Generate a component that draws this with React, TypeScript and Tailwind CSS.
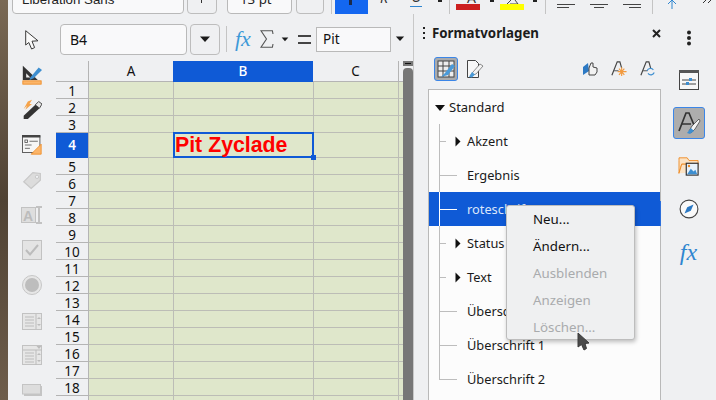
const ROWS = Array.from({ length: 19 }, (_, i) => i + 1);
const FONT = 'font-["Noto_Sans",sans-serif]';

function Chevron({ className = '' }: { className?: string }) {
  return (
    <svg width="12" height="7" viewBox="0 0 12 7" className={`shrink-0 ${className}`}>
      <path d="M1 0.5h10L6 6z" fill="#1a1a1a" />
    </svg>
  );
}

function ToolIcons() {
  return (
    <div className="flex flex-col items-center w-[48px] pt-[16px] shrink-0">
      <svg width="14" height="20" viewBox="0 0 14 20">
        <path d="M0.7 0.7 L0.7 15 L3.8 12.5 L6.6 19 L9.6 17.6 L7 11.2 L13 10.8 Z" fill="#fafafa" stroke="#3a3a3a" strokeWidth="1" />
      </svg>
      <svg width="20" height="20" viewBox="0 0 24 24" className="mt-[15px]">
        <path d="M1 1 L1 18 L19 18 Z" fill="#333" />
        <path d="M5 10 L5 15 L10 15Z" fill="#eee" />
        <path d="M10 15 L20 3 L24 6 L14 16 L9 18Z" fill="#3d8ed0" />
        <rect x="1" y="19" width="22" height="4" fill="#fbb56a" stroke="#ee8a22" />
      </svg>
      <svg width="20" height="20" viewBox="0 0 24 24" className="mt-[14px]">
        <path d="M2 24 L2 20 L16 7 L21 11 L7 24Z" fill="#333" />
        <path d="M16 7 L20 3 L24 6 L21 11Z" fill="#e4e4e4" stroke="#333" />
        <path d="M2 12 L7 3 L12 1 L9 6 L12 6 L4 13 L6 8Z" fill="#f5a34a" />
      </svg>
      <svg width="20" height="20" viewBox="0 0 24 24" className="mt-[16px]">
        <rect x="0.5" y="1" width="21" height="20" fill="#f6f6f6" stroke="#444" />
        <rect x="0" y="0" width="22" height="3" fill="#444" />
        <rect x="3.5" y="6" width="3" height="3" fill="none" stroke="#555" />
        <path d="M9 7.5h10M3.5 12h8M3.5 16h6" stroke="#555" />
        <path d="M11 23 L23 11 L23 23Z" fill="#fbb56a" stroke="#ee8a22" />
      </svg>
      <svg width="20" height="20" viewBox="0 0 24 24" className="mt-[16px]">
        <path d="M2 13 L13 2 L22 3 L22 11 L11 21Z" fill="#dcdcdc" stroke="#c8c8c8" strokeWidth="1.5" />
        <circle cx="18" cy="7" r="2" fill="#f0f1f3" stroke="#c2c2c2" />
      </svg>
      <svg width="22" height="18" viewBox="0 0 22 18" className="mt-[15px]">
        <rect x="0.5" y="1.5" width="14" height="15" fill="#dedede" stroke="#c2c2c2" />
        <text x="2" y="14.5" fontSize="14" fontWeight="bold" fill="#bcbcbc" fontFamily="Liberation Sans">A</text>
        <path d="M15 1h6M18 1v16M15 17h6" stroke="#c2c2c2" strokeWidth="2" fill="none" />
      </svg>
      <svg width="20" height="20" viewBox="0 0 20 20" className="mt-[16px]">
        <rect x="0.5" y="0.5" width="19" height="19" fill="#e4e4e4" stroke="#c2c2c2" />
        <path d="M4 10 L8 14.5 L16 5" stroke="#bcbcbc" strokeWidth="2" fill="none" />
      </svg>
      <svg width="20" height="20" viewBox="0 0 20 20" className="mt-[15px]">
        <circle cx="10" cy="10" r="9.5" fill="#e6e6e6" stroke="#c6c6c6" />
        <circle cx="10" cy="10" r="7" fill="#bdbdbd" />
      </svg>
      <svg width="20" height="17" viewBox="0 0 20 17" className="mt-[18px]">
        <rect x="0.5" y="0.5" width="19" height="16" fill="#e6e6e6" stroke="#c2c2c2" />
        <path d="M3 4h9M3 7h9M3 10h9M3 13h9M14 1v15" stroke="#bcbcbc" />
        <path d="M15 6l2-2 2 2zM15 11l2 2 2-2z" fill="#bcbcbc" />
      </svg>
      <svg width="20" height="20" viewBox="0 0 20 20" className="mt-[15px]">
        <rect x="0.5" y="0.5" width="19" height="19" fill="#e6e6e6" stroke="#c2c2c2" />
        <path d="M3 8h9M3 11h9M3 14h9M3 17h9M14 5v15M1 5h19" stroke="#bcbcbc" />
        <path d="M14.5 1h5l-2.5 3zM15 10l2-2 2 2zM15 15l2 2 2-2z" fill="#bcbcbc" />
      </svg>
      <svg width="20" height="12" viewBox="0 0 20 12" className="mt-[19px]">
        <rect x="2" y="2" width="18" height="10" fill="#c4c4c4" />
        <rect x="0.5" y="0.5" width="18" height="9.5" fill="#dddddd" stroke="#c4c4c4" />
      </svg>
    </div>
  );
}

function FormulaBar() {
  return (
    <div className="h-[32px] flex items-center shrink-0">
      <div className="w-[127px] h-[31px] bg-[#f9f9fa] border border-[#b9b9b9] rounded-[4px] ml-[4px] pl-[9px] flex items-center text-[14px] text-[#111] shrink-0">B4</div>
      <div className="w-[30px] h-[31px] border border-[#bdbdbd] rounded-[4px] ml-[3px] flex items-center justify-center shrink-0"><Chevron /></div>
      <div className="w-px h-[26px] bg-[#c4c4c4] ml-[6px] shrink-0" />
      <span className="ml-[8px] w-[16px] shrink-0 text-[22px] italic text-[#3d9ad8] font-['Liberation_Serif',serif] leading-none">fx</span>
      <svg width="14" height="18" viewBox="0 0 14 18" className="ml-[9px] shrink-0">
        <path d="M13 4 L12.4 0.7 L1 0.7 L6.5 9 L1 17.3 L12.4 17.3 L13 14" fill="none" stroke="#555" strokeWidth="1.1" />
      </svg>
      <Chevron className="ml-[7px] w-[8px] h-[5px]" />
      <div className="ml-[9px] w-[13px] h-[9px] border-y-2 border-[#444] shrink-0" />
      <div className="ml-[5px] w-[75px] h-[25px] bg-[#f9f9fa] border border-[#b9b9b9] pl-[6px] flex items-center text-[13.5px] text-[#111] shrink-0">Pit</div>
      <Chevron className="ml-[4px] w-[10px] h-[6px]" />
    </div>
  );
}

function Sheet() {
  return (
    <div className="flex-1 flex flex-col overflow-hidden mt-[6px]">
      <div className="flex h-[21px] shrink-0 text-[13.5px] text-[#111] leading-[20px] text-center">
        <div className="w-[33px] border-r border-b border-[#b4b4b4] shrink-0" />
        <div className="w-[84px] border-b border-[#b4b4b4] shrink-0">A</div>
        <div className="w-[140px] bg-[#0f5ad6] text-white font-medium shrink-0">B</div>
        <div className="w-[86px] border-r border-b border-[#b4b4b4] shrink-0">C</div>
        <div className="flex-1 border-b border-[#b4b4b4]" />
      </div>
      {ROWS.map(r => {
        const active = r === 4;
        return (
          <div key={r} className={`flex shrink-0 ${active ? 'h-[25px]' : 'h-[17px]'}`}>
            <div className={`w-[33px] shrink-0 border-r border-[#b4b4b4] text-center text-[13.5px] ${active ? 'bg-[#0f5ad6] text-white font-semibold leading-[25px]' : 'border-b text-[#111] leading-[18px]'}`}>{r}</div>
            <div className="w-[84px] shrink-0 bg-[#dfe7cb] border-b border-[#bcbdb6]" />
            <div className="relative w-[140px] shrink-0 bg-[#dfe7cb] border-l border-b border-[#bcbdb6]">
              {active && (
                <div className="absolute z-10 left-[-1px] top-[-1px] w-[141px] h-[26px] border-2 border-[#0f5ad6] font-['Liberation_Sans',sans-serif] font-bold text-[21.3px] leading-[23px] text-[#ff0000] whitespace-nowrap">
                  Pit Zyclade
                  <span className="absolute right-[-4px] bottom-[-4px] w-[5px] h-[5px] bg-[#0f5ad6]" />
                </div>
              )}
            </div>
            <div className="w-[86px] shrink-0 bg-[#dfe7cb] border-l border-r border-b border-[#bcbdb6]" />
            <div className="flex-1 bg-[#dfe7cb] border-b border-[#bcbdb6]" />
          </div>
        );
      })}
    </div>
  );
}

function Tree({ label, arrow = false, selected = false, last = false }: { label: string; arrow?: boolean; selected?: boolean; last?: boolean }) {
  return (
    <div className={`relative h-[34px] text-[12.8px] ${selected ? 'bg-[#0f5ad6] text-[#dbe6fa]' : 'text-[#1a1a1a]'}`}>
      <span className={`absolute left-[10px] top-0 w-px ${last ? 'h-[17px]' : 'h-full'} ${selected ? 'bg-white' : 'bg-[#bdbdbd]'}`} />
      <span className={`absolute left-[10px] top-[17px] h-px ${arrow ? 'w-[7px]' : 'w-[18px]'} ${selected ? 'bg-white' : 'bg-[#bdbdbd]'}`} />
      {arrow && (
        <svg width="6" height="11" viewBox="0 0 6 11" className="absolute left-[26px] top-[12px]">
          <path d="M0.5 0.5 L5.5 5.5 L0.5 10.5Z" fill="#111" />
        </svg>
      )}
      <span className="absolute left-[38px] top-[7px] leading-[20px]">{label}</span>
    </div>
  );
}

function Menu() {
  const items: [string, boolean][] = [['Neu...', true], ['Ändern...', true], ['Ausblenden', false], ['Anzeigen', false], ['Löschen...', false]];
  return (
    <div className="absolute left-[506px] top-[205px] w-[129px] h-[135px] bg-[#eff0f1] border border-[#bdbdbd] rounded-[3px] shadow-[1px_2px_4px_rgba(0,0,0,0.25)] py-px">
      {items.map(([t, on]) => (
        <div key={t} className={`h-[27px] pl-[26px] text-[13.3px] leading-[24px] ${on ? 'text-[#111]' : 'text-[#a9abad]'}`}>{t}</div>
      ))}
    </div>
  );
}

function StylesPanel() {
  return (
    <div className="w-[247px] flex flex-col shrink-0">
      <div className="h-[38px] flex items-center relative shrink-0">
        <svg width="4" height="14" viewBox="0 0 4 14" className="absolute left-[8px] top-[12px]">
          <path d="M2 1v2M2 6v2M2 11v2" stroke="#222" strokeWidth="2" />
        </svg>
        <span className="text-[13.3px] font-bold text-[#1c1c1c] ml-[18px] mt-[2px]">Formatvorlagen</span>
        <svg width="9" height="9" viewBox="0 0 9 9" className="absolute left-[238px] top-[15px]">
          <path d="M1 1l7 7M8 1l-7 7" stroke="#222" strokeWidth="2" />
        </svg>
      </div>
      <div className="flex items-center h-[34px] pl-[20px] shrink-0">
        <div className="w-[24px] h-[24px] rounded-[3px] border border-[#3b86e8] bg-[#a9abad] flex items-center justify-center">
          <svg width="19" height="19" viewBox="0 0 19 19">
            <rect x="1" y="1" width="16" height="16" fill="#eee" stroke="#444" />
            <path d="M1 6h16M1 11h16M6 1v16M12 1v16" stroke="#444" />
            <path d="M4 17 L8 13 L15 4 L18 6 L11 15 Z" fill="#4a9ad8" />
          </svg>
        </div>
        <svg width="18" height="20" viewBox="0 0 18 20" className="ml-[8px]">
          <path d="M1.5 1.5h8l3 3v14h-11z" fill="#f7f7f7" stroke="#444" />
          <path d="M4 17 L7 13 L14 5 L17 7 L10 15Z" fill="#f4f4f4" stroke="#444" strokeWidth="0.6" />
          <path d="M3 18 L6 13 L9 15.5 L6 18.5Z" fill="#4a9ad8" />
        </svg>
        <svg width="15" height="14" viewBox="0 0 15 14" className="ml-[99px]">
          <path d="M0 5 L5 1 L6 9 L0 13Z" fill="#2c79c4" />
          <path d="M6 13 V6 L8 1 L10 1 V5 L14 6 V10 L12 13Z" fill="#f2f2f2" stroke="#444" />
        </svg>
        <svg width="16" height="16" viewBox="0 0 18 18" className="ml-[13px]">
          <path d="M1 16 L7 1 L10 1 L12 8" fill="none" stroke="#444" strokeWidth="1.3" />
          <path d="M3.5 11h5" stroke="#444" />
          <path d="M12 7v10M7.5 12h10M9 8.5l6 7M15 8.5l-6 7" stroke="#f29a3f" strokeWidth="1.3" />
        </svg>
        <svg width="16" height="16" viewBox="0 0 18 18" className="ml-[13px]">
          <path d="M1 16 L7 1 L10 1 L12 8" fill="none" stroke="#444" strokeWidth="1.3" />
          <path d="M3.5 11h5" stroke="#444" />
          <path d="M8 11a4 4 0 0 1 7-1M16 13a4 4 0 0 1-7 1" fill="none" stroke="#3d8ed0" strokeWidth="1.3" />
        </svg>
      </div>
      <div className="mt-[3px] ml-[14px] w-[233px] flex-1 bg-[#fcfcfc] border border-[#b9b9b9] border-b-0">
        <div className="h-[34px] text-[13px] text-[#1a1a1a] relative">
          <svg width="10" height="6" viewBox="0 0 10 6" className="absolute left-[6px] top-[15px]"><path d="M0 0h10L5 6z" fill="#111" /></svg>
          <span className="absolute left-[20px] top-[7px] leading-[20px]">Standard</span>
        </div>
        <Tree label="Akzent" arrow />
        <Tree label="Ergebnis" />
        <Tree label="roteschrift" selected />
        <Tree label="Status" arrow />
        <Tree label="Text" arrow />
        <Tree label="Überschrift" />
        <Tree label="Überschrift 1" />
        <Tree label="Überschrift 2" last />
      </div>
    </div>
  );
}

function TabBar() {
  return (
    <div className="flex-1 flex flex-col items-center relative">
      <span className="absolute left-[-1px] top-[187px] w-px h-[25px] bg-[#2c6fdc]" />
      <svg width="6" height="16" viewBox="0 0 6 16" className="mt-[16px] shrink-0">
        <circle cx="3" cy="2.5" r="2" fill="#222" /><circle cx="3" cy="8" r="2" fill="#222" /><circle cx="3" cy="13.5" r="2" fill="#222" />
      </svg>
      <svg width="20" height="20" viewBox="0 0 20 20" className="mt-[24px] shrink-0">
        <rect x="0.5" y="0.5" width="19" height="19" fill="#f7f7f7" stroke="#444" />
        <rect x="0" y="0" width="20" height="3" fill="#555" />
        <path d="M3 10h14M3 14h14" stroke="#444" />
        <rect x="10" y="8" width="3" height="3" fill="#3d8ed0" /><rect x="7" y="12" width="3" height="3" fill="#3d8ed0" />
      </svg>
      <div className="mt-[17px] w-[32px] h-[32px] rounded-[3px] border border-[#3b86e8] bg-[#adadad] flex items-center justify-center shrink-0">
        <svg width="24" height="24" viewBox="0 0 24 24">
          <path d="M2 20 L9 2 L12 2 L17 14" fill="none" stroke="#333" strokeWidth="1.7" />
          <path d="M5 13h9" stroke="#333" strokeWidth="1.5" />
          <path d="M12 20 L15 15 L22 8 L23 10 L18 18 L14 22 Z" fill="#f4f4f4" stroke="#333" strokeWidth="0.7" />
          <path d="M10 22 L14 17 L17 20 L13 23Z" fill="#3d8ed0" />
        </svg>
      </div>
      <svg width="22" height="20" viewBox="0 0 24 22" className="mt-[17px] shrink-0">
        <path d="M1 5 V2 H10 L12 5 H22 V9 H4 L1 19Z" fill="#fce3c4" stroke="#ee8a22" />
        <path d="M1 19 L4 9 H22 L21 18" fill="#fce3c4" stroke="#ee8a22" />
        <rect x="9" y="8" width="13" height="13" fill="#e8f2fb" stroke="#333" strokeWidth="1.3" />
        <path d="M10 20 L14 14 L17 17 L19 15 L21 20Z" fill="#3d8ed0" />
        <circle cx="12" cy="11" r="1.3" fill="#ee8a22" />
      </svg>
      <svg width="20" height="20" viewBox="0 0 22 22" className="mt-[23px] shrink-0">
        <circle cx="11" cy="11" r="9.8" fill="#fafafa" stroke="#444" strokeWidth="1.2" />
        <path d="M16 6 L13 13 L6 16 L9 9Z" fill="#2c79c4" />
      </svg>
      <span className="mt-[19px] text-[24px] italic text-[#2f86d0] font-['Liberation_Serif',serif] leading-[28px]">fx</span>
    </div>
  );
}

function TopBar() {
  return (
    <div className="h-[14px] relative overflow-hidden shrink-0">
      <div className="absolute left-[4px] top-[-16px] w-[172px] h-[30px] bg-[#f9f9fa] border border-[#b9b9b9] rounded-[4px] pl-[9px] text-[13.3px] leading-[29px] font-['Liberation_Sans',sans-serif] text-[#222]">Liberation Sans</div>
      <div className="absolute left-[179px] top-[-16px] w-[30px] h-[30px] border border-[#bdbdbd] rounded-[4px]" />
      <span className="absolute left-[193px] top-0 w-px h-[3px] bg-[#333]" />
      <div className="absolute left-[219px] top-[-16px] w-[65px] h-[30px] bg-[#f9f9fa] border border-[#b9b9b9] rounded-[4px] pl-[12px] text-[13.3px] leading-[29px] text-[#222]">13 pt</div>
      <div className="absolute left-[288px] top-[-16px] w-[28px] h-[30px] border border-[#bdbdbd] rounded-[4px]" />
      <span className="absolute left-[323px] top-0 w-px h-[14px] bg-[#c4c4c4]" />
      <div className="absolute left-[327px] top-[-10px] w-[33px] h-[26px] bg-[#1467f0] rounded-[3px]"><span className="absolute left-[14px] top-[4px] w-[3px] h-[11px] bg-[#1b2a4a]" /></div>
      <div className="absolute left-[372px] top-[-12px] text-[14px] italic text-[#333] leading-[20px]">K</div>
      <div className="absolute left-[403px] top-[-13px] text-[14px] text-[#333] leading-[20px]">U</div>
      <span className="absolute left-[402px] top-[6px] w-[12px] h-px bg-[#2f86d0]" />
      <span className="absolute left-[430px] top-0 w-[4px] h-[2px] bg-[#222]" />
      <span className="absolute left-[441px] top-0 w-px h-[15px] bg-[#c4c4c4]" />
      <div className="absolute left-[459px] top-[-12px] text-[14px] text-[#333] leading-[20px]">A</div>
      <span className="absolute left-[448px] top-[4px] w-[24px] h-[6px] bg-[#cc1f1f]" />
      <span className="absolute left-[482px] top-0 w-[4px] h-[2px] bg-[#222]" />
      <svg width="14" height="4" viewBox="0 0 14 4" className="absolute left-[498px] top-0"><path d="M1 4 L5 0M9 0 L12 4 L4 4" fill="#eee" stroke="#444" /></svg>
      <span className="absolute left-[492px] top-[4px] w-[24px] h-[6px] bg-[#ffff00]" />
      <span className="absolute left-[525px] top-0 w-[4px] h-[2px] bg-[#222]" />
      <span className="absolute left-[537px] top-0 w-px h-[15px] bg-[#c4c4c4]" />
      <span className="absolute left-[549px] top-[4px] w-[18px] h-px bg-[#444]" />
      <span className="absolute left-[549px] top-[7px] w-[12px] h-px bg-[#444]" />
      <span className="absolute left-[582px] top-[4px] w-[18px] h-px bg-[#444]" />
      <span className="absolute left-[586px] top-[7px] w-[10px] h-px bg-[#444]" />
      <span className="absolute left-[615px] top-[4px] w-[18px] h-px bg-[#444]" />
      <span className="absolute left-[621px] top-[7px] w-[12px] h-px bg-[#444]" />
      <span className="absolute left-[644px] top-0 w-px h-[15px] bg-[#c4c4c4]" />
      <svg width="10" height="10" viewBox="0 0 10 10" className="absolute left-[659px] top-0">
        <path d="M5 0v9M1 4l4-4 4 4" fill="none" stroke="#2f86d0" />
      </svg>
      <svg width="10" height="4" viewBox="0 0 10 4" className="absolute left-[695px] top-0">
        <path d="M0 3l3-3M5 3l3-3" fill="none" stroke="#333" />
      </svg>
    </div>
  );
}

export default function App() {
  return (
    <div className={`relative w-[716px] h-[400px] overflow-hidden flex bg-[#eff0f2] ${FONT}`}>
      <div className="w-[8px] h-full bg-gradient-to-b from-[#7a6955] via-[#4f4234] to-[#6e5d4b] shrink-0" />
      <div className="flex-1 flex flex-col min-w-0">
        <TopBar />
        <div className="flex-1 flex min-h-0">
          <ToolIcons />
          <div className="w-[347px] flex flex-col shrink-0 pt-[9px]">
            <FormulaBar />
            <Sheet />
          </div>
          <div className="w-[10px] shrink-0 flex flex-col pt-[47px]">
            <div className="h-[5px] bg-[#777] flex items-center px-[2px]"><span className="w-full h-px bg-[#111]" /></div>
            <div className="flex-1 bg-[#777] rounded-t-[4px] mt-[2px]" />
          </div>
          <div className="w-px bg-[#c8c8c8] shrink-0" />
          <StylesPanel />
          <TabBar />
        </div>
      </div>
      <Menu />
      <svg width="13" height="20" viewBox="0 0 13 20" className="absolute left-[577px] top-[332px]">
        <path d="M1 1 L1 15 L4.5 12.5 L7 18 L9.5 16.5 L8 11.5 L12 11Z" fill="#4a4a4a" stroke="#3a3a3a" />
      </svg>
    </div>
  );
}
